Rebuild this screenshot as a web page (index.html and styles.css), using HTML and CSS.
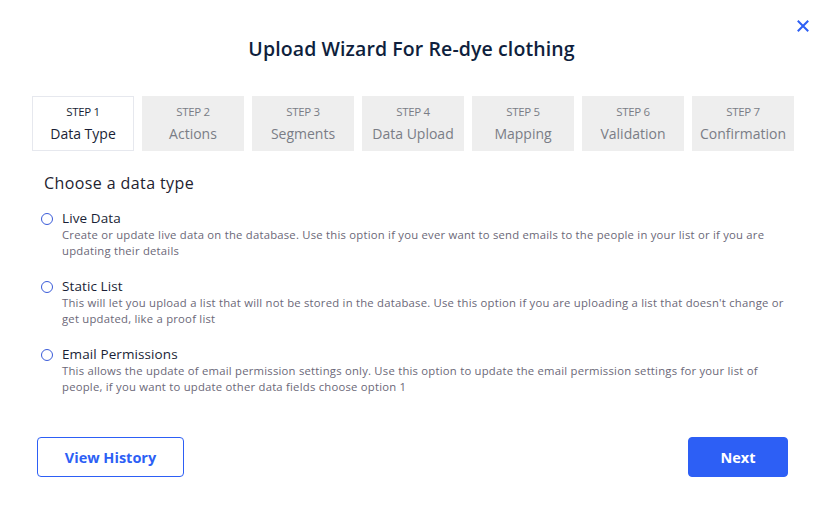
FILE: index.html
```html
<!DOCTYPE html>
<html>
<head>
<meta charset="utf-8">
<link rel="stylesheet" href="styles.css">
</head>
<body>
<div class="modal">
  <button class="close" aria-label="Close">
    <svg width="12" height="12" viewBox="0 0 12 12"><path d="M1.5 1.5 L10.5 10.5 M10.5 1.5 L1.5 10.5" stroke="#2d5ff5" stroke-width="2" stroke-linecap="square"/></svg>
  </button>
  <h1 class="title">Upload Wizard For Re-dye clothing</h1>
  <div class="steps">
    <div class="step active"><span class="step-num">STEP 1</span><span class="step-label">Data Type</span></div>
    <div class="step"><span class="step-num">STEP 2</span><span class="step-label">Actions</span></div>
    <div class="step"><span class="step-num">STEP 3</span><span class="step-label">Segments</span></div>
    <div class="step"><span class="step-num">STEP 4</span><span class="step-label">Data Upload</span></div>
    <div class="step"><span class="step-num">STEP 5</span><span class="step-label">Mapping</span></div>
    <div class="step"><span class="step-num">STEP 6</span><span class="step-label">Validation</span></div>
    <div class="step"><span class="step-num">STEP 7</span><span class="step-label">Confirmation</span></div>
  </div>
  <h2 class="subtitle">Choose a data type</h2>
  <div class="options">
    <div class="option">
      <span class="radio"></span>
      <div class="option-body">
        <div class="option-label">Live Data</div>
        <p class="option-desc">Create or update live data on the database. Use this option if you ever want to send emails to the people in your list or if you are updating their details</p>
      </div>
    </div>
    <div class="option">
      <span class="radio"></span>
      <div class="option-body">
        <div class="option-label">Static List</div>
        <p class="option-desc">This will let you upload a list that will not be stored in the database. Use this option if you are uploading a list that doesn't change or get updated, like a proof list</p>
      </div>
    </div>
    <div class="option">
      <span class="radio"></span>
      <div class="option-body">
        <div class="option-label">Email Permissions</div>
        <p class="option-desc">This allows the update of email permission settings only. Use this option to update the email permission settings for your list of people, if you want to update other data fields choose option 1</p>
      </div>
    </div>
  </div>
  <div class="actions">
    <button class="btn btn-outline">View History</button>
    <button class="btn btn-primary">Next</button>
  </div>
</div>
</body>
</html>
```
FILE: styles.css
```css
* { box-sizing: border-box; }
html, body { margin: 0; padding: 0; background: #fff; }
body { font-family: "Open Sans", "Noto Sans", sans-serif; color: #1a1f36; }
.modal {
  position: relative;
  width: 833px;
  height: 515px;
  padding: 36px 39px 0 32px;
}
.close {
  position: absolute;
  top: 20px;
  right: 24px;
  border: 0;
  background: none;
  padding: 0;
  width: 12px;
  height: 12px;
  cursor: pointer;
}
.close svg { display: block; }
.title {
  margin: 0;
  text-align: center;
  font-size: 19.5px;
  font-weight: 600;
  letter-spacing: 0.1px;
  color: #0f1f3d;
  line-height: 26px;
  padding-right: 3px;
}
.steps {
  display: flex;
  gap: 8px;
  margin-top: 34px;
}
.step {
  width: 102px;
  height: 55px;
  background: #eeeeee;
  display: flex;
  flex-direction: column;
  align-items: center;
  padding-top: 8px;
  color: #7a7d86;
}
.step.active {
  background: #fff;
  border: 1px solid #e6e8ee;
  padding-top: 7px;
  color: #1a1f36;
}
.step-num { font-size: 11.5px; line-height: 16px; letter-spacing: -0.3px; }
.step-label { font-size: 14px; line-height: 20px; margin-top: 4px; }
.subtitle {
  margin: 22px 0 0 12px;
  font-size: 16px;
  font-weight: 400;
  letter-spacing: 0.4px;
  line-height: 20px;
  color: #1e2230;
}
.options {
  display: flex;
  flex-direction: column;
  gap: 18px;
  margin-top: 16px;
  padding-left: 9px;
}
.option { display: flex; align-items: flex-start; gap: 9px; }
.radio {
  width: 12px;
  height: 12px;
  border: 1.3px solid #3a5bd9;
  border-radius: 50%;
  margin-top: 4px;
  flex: none;
}
.option-body { width: 725px; }
.option-label { font-size: 13.5px; line-height: 18px; color: #1a1f36; letter-spacing: 0.1px; }
.option-desc {
  margin: 0;
  font-size: 11.3px;
  letter-spacing: 0.22px;
  line-height: 16px;
  color: #6b6878;
}
.actions {
  display: flex;
  justify-content: space-between;
  margin-top: 42px;
  padding-left: 5px;
  padding-right: 6px;
}
.btn {
  height: 40px;
  border-radius: 4px;
  font-family: inherit;
  font-size: 14.5px;
  font-weight: 700;
  cursor: pointer;
}
.btn-outline {
  width: 147px;
  background: #fff;
  border: 1px solid #2d5ff5;
  color: #2d5ff5;
}
.btn-primary {
  width: 100px;
  background: #2d5ff5;
  border: 1px solid #2d5ff5;
  color: #fff;
}
```
